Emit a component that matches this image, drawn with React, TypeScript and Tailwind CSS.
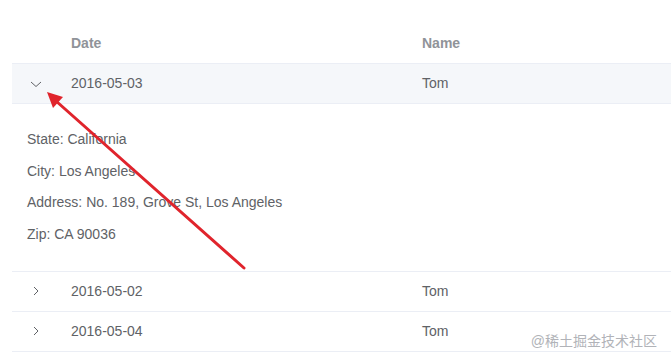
const rows = [
  { date: "2016-05-03", name: "Tom", open: true },
  { date: "2016-05-02", name: "Tom", open: false },
  { date: "2016-05-04", name: "Tom", open: false },
];

function Chevron({ open }: { open: boolean }) {
  return (
    <svg width="12" height="12" viewBox="0 0 12 12" className="text-[#606266]">
      {open ? (
        <path d="M1 4 L6 8.5 L11 4" fill="none" stroke="currentColor" strokeWidth="1" />
      ) : (
        <path d="M4 2 L8 6 L4 10" fill="none" stroke="currentColor" strokeWidth="1" />
      )}
    </svg>
  );
}

export default function App() {
  return (
    <div
      className="relative w-[671px] h-[361px] bg-white overflow-hidden text-[14px]"
      style={{ fontFamily: '"Liberation Sans", Arial, sans-serif' }}
    >
      <div className="ml-[12px] mt-[24px] w-[680px]">
        {/* header */}
        <div className="flex h-[40px] items-center border-b border-[#ebeef5] font-bold text-[#909399]">
          <div className="w-[48px]" />
          <div className="w-[350px] pl-[11px]">Date</div>
          <div className="flex-1 pl-[12px]">Name</div>
        </div>

        {rows.map((r) => (
          <div key={r.date}>
            <div
              className={`flex h-[40px] items-center border-b border-[#ebeef5] text-[#606266] ${
                r.open ? "bg-[#f5f7fa]" : ""
              }`}
            >
              <div className="w-[48px] flex justify-center pr-[1px]">
                <Chevron open={r.open} />
              </div>
              <div className="w-[350px] pl-[11px]">{r.date}</div>
              <div className="flex-1 pl-[12px]">{r.name}</div>
            </div>
            {r.open && (
              <div className="flex flex-col gap-[14px] pl-[15px] pt-[27px] pb-[27px] border-b border-[#ebeef5] text-[#606266] leading-[17.7px]">
                <p>State: California</p>
                <p>City: Los Angeles</p>
                <p>Address: No. 189, Grove St, Los Angeles</p>
                <p>Zip: CA 90036</p>
              </div>
            )}
          </div>
        ))}
      </div>

      {/* annotation arrow */}
      <svg className="absolute left-0 top-0 pointer-events-none" width="671" height="361">
        <line x1="244" y1="268" x2="56" y2="101" stroke="#e0242c" strokeWidth="3" strokeLinecap="round" />
        <polygon points="47,92 63,97 53,108" fill="#e0242c" />
      </svg>

      {/* watermark */}
      <div
        className="absolute right-[14px] top-[332px] text-[14px] leading-[18px] text-[#b1b3b8]"
        style={{ fontFamily: '"Liberation Sans", "Noto Sans CJK SC", sans-serif' }}
      >
        @稀土掘金技术社区
      </div>
    </div>
  );
}
